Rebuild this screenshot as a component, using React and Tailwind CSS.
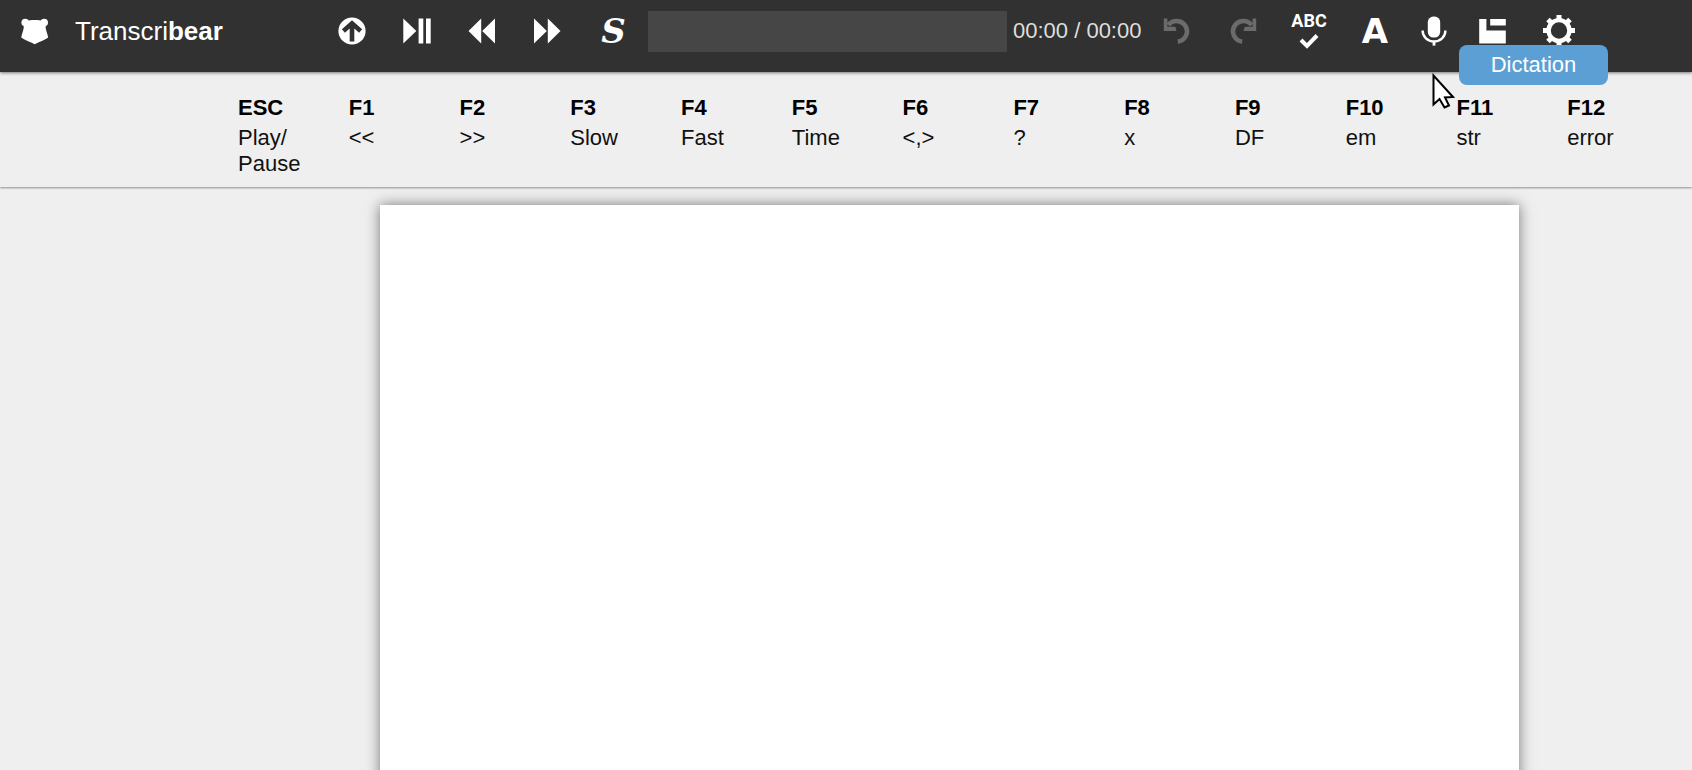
const KEYS = [
  { key: "ESC", label: "Play/ Pause" },
  { key: "F1", label: "<<" },
  { key: "F2", label: ">>" },
  { key: "F3", label: "Slow" },
  { key: "F4", label: "Fast" },
  { key: "F5", label: "Time" },
  { key: "F6", label: "<,>" },
  { key: "F7", label: "?" },
  { key: "F8", label: "x" },
  { key: "F9", label: "DF" },
  { key: "F10", label: "em" },
  { key: "F11", label: "str" },
  { key: "F12", label: "error" },
];

const BearLogo = () => (
  <svg className="h-7 w-7" viewBox="0 0 28 28" fill="currentColor" aria-hidden="true">
    <circle cx="4.2" cy="5.6" r="3.8" />
    <circle cx="23.2" cy="5.6" r="3.8" />
    <path d="M5 4C10 2.6 17.4 2.6 22.4 4L24.6 8.4C24.2 12 26.6 16.5 27.2 20.4C24 22.6 18 25 13.7 27.2C9.4 25 3.4 22.6 0.2 20.4C0.8 16.5 3.2 12 2.8 8.4Z" />
  </svg>
);

const OpenIcon = () => (
  <svg className="h-7 w-7" viewBox="0 0 28 28" aria-hidden="true">
    <circle cx="14" cy="14" r="13.6" fill="currentColor" />
    <path d="M5.4 14L14 6.4L22.6 14M14 7V24.4" fill="none" stroke="#313131" strokeWidth="4.6" />
  </svg>
);

const PlayPauseIcon = () => (
  <svg className="h-7 w-7" viewBox="0 0 28 28" fill="currentColor" aria-hidden="true">
    <path d="M0.3 1.6L13.3 14L0.3 26.4ZM15.6 1.6H20.3V26.4H15.6ZM23 1.6H27.7V26.4H23Z" />
  </svg>
);

const RewindIcon = () => (
  <svg className="h-7 w-7" viewBox="0 0 28 28" fill="currentColor" aria-hidden="true">
    <path d="M13.2 1.6V26.4L0.5 14ZM27 1.6V26.4L14.2 14Z" />
  </svg>
);

const ForwardIcon = () => (
  <svg className="h-7 w-7" viewBox="0 0 28 28" fill="currentColor" aria-hidden="true">
    <path d="M1 1.6V26.4L13.8 14ZM14.8 1.6V26.4L27.5 14Z" />
  </svg>
);

const UndoIcon = () => (
  <svg className="h-7 w-7" viewBox="0 0 28 28" aria-hidden="true">
    <path d="M5.4 8.2A10.3 10.3 0 1 1 14.8 24.6" fill="none" stroke="currentColor" strokeWidth="4.6" />
    <path d="M0.8 1.6H4.4V9.8H12.4L13.4 14H0.8Z" fill="currentColor" />
  </svg>
);

const SpellIcon = () => (
  <svg className="h-5 w-5" viewBox="0 0 20 20" aria-hidden="true">
    <path d="M2 11L8 17L18 6.5" fill="none" stroke="currentColor" strokeWidth="4" />
  </svg>
);

const MicIcon = () => (
  <svg className="h-[30px] w-[26px]" viewBox="0 0 26 30" aria-hidden="true">
    <rect x="6.8" y="0.6" width="12.4" height="21" rx="5.6" fill="currentColor" />
    <path d="M1.6 14.5C1.6 21 6.6 25.4 13 25.4C19.4 25.4 24.4 21 24.4 14.5" fill="none" stroke="currentColor" strokeWidth="2.4" />
    <path d="M11.6 25H14.4V29.6H11.6Z" fill="currentColor" />
  </svg>
);

const PanelIcon = () => (
  <svg className="h-7 w-7" viewBox="0 0 28 28" fill="currentColor" aria-hidden="true">
    <path d="M0.2 2H7.4V13.6H26.8V26.4H0.2ZM11.2 2H26.8V8.4H11.2Z" />
  </svg>
);

const GearIcon = () => (
  <svg className="h-8 w-8" viewBox="0 0 32 32" aria-hidden="true">
    <circle cx="16" cy="15.5" r="10.4" fill="none" stroke="currentColor" strokeWidth="4.4" />
    <path
      d="M16 -0.5V5M16 26.5V32M0 15.5H5M27 15.5H32M5 4.5L8.5 8M23.5 23L27 26.5M27 4.5L23.5 8M8.5 23L5 26.5"
      stroke="currentColor"
      strokeWidth="5"
    />
  </svg>
);

const Pointer = () => (
  <svg className="h-9 w-6" viewBox="0 0 24 36" aria-hidden="true">
    <path d="M1.5 2.5V31.5L7.5 26L12.5 34.5L17 32.5L13 24.5L21 24Z" fill="#fff" stroke="#000" strokeWidth="2" />
  </svg>
);

const ToolButton = ({ label, className = "w-[66px]", children }) => (
  <button type="button" aria-label={label} className={`relative flex h-full shrink-0 items-center justify-center ${className}`}>
    {children}
  </button>
);

const Toolbar = () => (
  <header className="relative z-20 flex h-[72px] items-center bg-[#313131] pr-[100px] pb-[10px] text-white shadow-[0_1px_3px_rgba(0,0,0,0.5)]">
    <a href="#" className="flex w-[319px] shrink-0 items-center pl-[21px] text-[26px] leading-8">
      <BearLogo />
      <span className="ml-[26px]">
        Transcri<b>bear</b>
      </span>
    </a>

    <ToolButton label="Open file" className="w-[65px]"><OpenIcon /></ToolButton>
    <ToolButton label="Play or pause" className="w-[65px]"><PlayPauseIcon /></ToolButton>
    <ToolButton label="Rewind" className="w-[65px]"><RewindIcon /></ToolButton>
    <ToolButton label="Fast forward" className="w-[65px]"><ForwardIcon /></ToolButton>
    <ToolButton label="Speed" className="w-[69px]">
      <span className="font-['DejaVu_Serif',serif] text-[34px] leading-8 font-bold italic">S</span>
    </ToolButton>

    <input type="text" aria-label="Position" className="h-[41px] min-w-0 flex-1 bg-[#464646] px-2" />
    <span className="w-[137px] shrink-0 pl-[6px] text-[22px] leading-[26px] whitespace-nowrap text-[#dedede]">00:00 / 00:00</span>

    <ToolButton label="Undo">
      <span className="text-[#6b6b6b]"><UndoIcon /></span>
    </ToolButton>
    <ToolButton label="Redo">
      <span className="-scale-x-100 text-[#6b6b6b]"><UndoIcon /></span>
    </ToolButton>
    <ToolButton label="Spell check">
      <span className="flex flex-col items-center">
        <span className="font-['Roboto',sans-serif] text-[18px] leading-4 font-bold">ABC</span>
        <SpellIcon />
      </span>
    </ToolButton>
    <ToolButton label="Font">
      <span className="font-['DejaVu_Sans',sans-serif] text-[34px] leading-8 font-bold">A</span>
    </ToolButton>
    <ToolButton label="Dictation" className="w-[52px]">
      <MicIcon />
      <span className="absolute top-[45px] left-[51px] z-10 flex h-10 w-[149px] items-center justify-center rounded-lg bg-[#5c9fd5] pb-px text-[22px] leading-[26px]">
        Dictation
      </span>
      <span className="absolute top-[73px] left-6"><Pointer /></span>
    </ToolButton>
    <ToolButton label="Layout"><PanelIcon /></ToolButton>
    <ToolButton label="Settings"><GearIcon /></ToolButton>
  </header>
);

const ShortcutBar = () => (
  <dl className="relative z-10 grid grid-cols-13 bg-[#efefef] pt-[23px] pr-[14px] pb-[10px] pl-[238px] text-[22px] leading-[26px] shadow-[0_1px_2px_rgba(0,0,0,0.4)]">
    {KEYS.map(({ key, label }) => (
      <div key={key} className="flex flex-col gap-1 pr-8">
        <dt className="font-bold text-black">{key}</dt>
        <dd className="text-[#111]">{label}</dd>
      </div>
    ))}
  </dl>
);

const App = () => {
  return (
    <div className="flex min-h-screen flex-col overflow-hidden bg-[#efefef] font-['Liberation_Sans',Arial,sans-serif]">
      <Toolbar />
      <ShortcutBar />
      {/* the sheet runs on past the bottom edge of the window */}
      <main className="flex flex-1 pt-[18px] pr-[173px] pl-[380px]">
        <textarea
          aria-label="Transcript"
          className="-mb-5 flex-1 resize-none bg-white p-12 text-[22px] shadow-[0_0_13px_rgba(0,0,0,0.5)] outline-none"
        />
      </main>
    </div>
  );
};

export default App;
